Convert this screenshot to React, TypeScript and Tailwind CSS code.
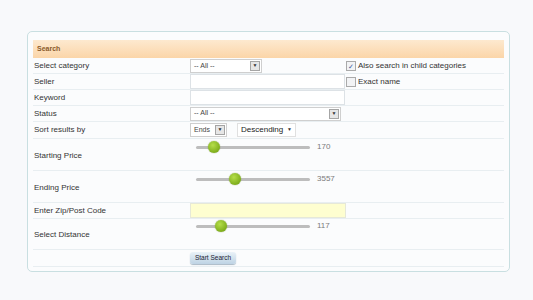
import React from "react";

function Slider({ pos, value }: { pos: number; value: string }) {
  return (
    <div className="flex items-center h-[12px] mt-[1px]">
      <div className="relative w-[114px] h-[3px] ml-[6px] rounded-full bg-[#bdbdbd]">
        <div
          className="absolute top-[-5px] w-[12px] h-[12px] rounded-full bg-[radial-gradient(circle_at_40%_35%,#b5de4a,#7fae1c_70%,#6a9614)] shadow-[0_0_1px_#5a7a10]"
          style={{ left: pos - 6 }}
        />
      </div>
      <span className="ml-[7px] text-[#7a7a7a] text-[8px]">{value}</span>
    </div>
  );
}

function SelBox({ w, text }: { w: string; text: string }) {
  return (
    <div className={`${w} h-[14px] bg-white border border-[#cfcfcf] flex items-center justify-between pl-[3px] pr-[1px]`}>
      <span className="text-[7px] text-[#444]">{text}</span>
      <span className="w-[10px] h-[10px] border border-[#a5a5a5] bg-[#e6e6e6] flex items-center justify-center text-[5px] text-[#333]">▼</span>
    </div>
  );
}

export default function App() {
  const row = "flex border-b border-[#e8eef1]";
  const label = "w-[157px] pl-[1px] flex items-center";
  return (
    <div className="w-[533px] h-[300px] bg-[#f8f9fb] pt-[31px] pl-[27px] font-['Liberation_Sans',sans-serif] text-[8px] text-[#333]">
      <div className="w-[483px] h-[241px] border border-[#c9dfe1] rounded-[5px] bg-[#fbfcfd] pt-[8px] px-[5px]">
        <div className="h-[18px] bg-gradient-to-b from-[#fde9cf] to-[#fbd5a8] flex items-center pl-[4px] text-[7px] font-bold text-[#8a5a2a]">
          Search
        </div>

        <div className={`${row} h-[16px] pt-[1px]`}>
          <div className={label}>Select category</div>
          <div className="w-[156px] flex items-center">
            <SelBox w="w-[72px]" text="-- All --" />
          </div>
          <div className="flex items-center gap-[1px]">
            <span className="w-[10px] h-[10px] border border-[#aaa] bg-[#f2f3f5] flex items-center justify-center text-[7px] text-[#3c5a9a] leading-none">✓</span>
            <span className="ml-[1px]">Also search in child categories</span>
          </div>
        </div>

        <div className={`${row} h-[16px]`}>
          <div className={label}>Seller</div>
          <div className="w-[156px] flex items-center">
            <div className="w-[155px] h-[15px] bg-white border border-[#dde2e6]" />
          </div>
          <div className="flex items-center gap-[1px]">
            <span className="w-[10px] h-[10px] border border-[#aaa] bg-[#f2f3f5]" />
            <span className="ml-[1px]">Exact name</span>
          </div>
        </div>

        <div className={`${row} h-[16px]`}>
          <div className={label}>Keyword</div>
          <div className="w-[156px] flex items-center">
            <div className="w-[155px] h-[15px] bg-white border border-[#dde2e6]" />
          </div>
        </div>

        <div className={`${row} h-[16px]`}>
          <div className={label}>Status</div>
          <div className="w-[156px] flex items-center">
            <SelBox w="w-[151px]" text="-- All --" />
          </div>
        </div>

        <div className={`${row} h-[17px]`}>
          <div className={label}>Sort results by</div>
          <div className="flex items-center">
            <SelBox w="w-[37px]" text="Ends" />
            <div className="ml-[10px] w-[59px] h-[14px] bg-white border border-[#e0e0e0] flex items-center justify-between pl-[3px] pr-[3px]">
              <span className="text-[8px] text-[#222]">Descending</span>
              <span className="text-[5px] text-[#333]">▼</span>
            </div>
          </div>
        </div>

        <div className={`${row} h-[32px]`}>
          <div className={`${label} pt-[2px]`}>Starting Price</div>
          <div className="pt-[1px]">
            <Slider pos={18} value="170" />
          </div>
        </div>

        <div className={`${row} h-[32px]`}>
          <div className={`${label} pt-[2px]`}>Ending Price</div>
          <div className="pt-[1px]">
            <Slider pos={39} value="3557" />
          </div>
        </div>

        <div className={`${row} h-[16px]`}>
          <div className={label}>Enter Zip/Post Code</div>
          <div className="w-[156px] flex items-center">
            <div className="w-[157px] h-[15px] bg-[#fefed0] border border-[#e6e8d8]" />
          </div>
        </div>

        <div className={`${row} h-[31px]`}>
          <div className={`${label} pt-[2px]`}>Select Distance</div>
          <div>
            <Slider pos={25} value="117" />
          </div>
        </div>

        <div className={`${row} h-[17px]`}>
          <div className="w-[157px]" />
          <div className="flex items-center">
            <button className="h-[12px] w-[46px] rounded-[3px] bg-gradient-to-b from-[#eaf2f8] to-[#bed3e4] shadow-[0_1px_1px_#a9b9c6] text-[6.5px] text-[#223] leading-none">
              Start Search
            </button>
          </div>
        </div>
      </div>
    </div>
  );
}
